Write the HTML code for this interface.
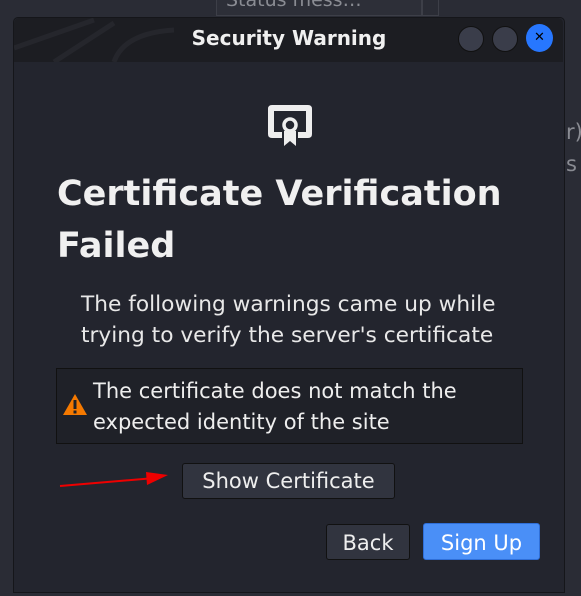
<!DOCTYPE html>
<html><head><style>
body{margin:0;width:581px;height:596px;background:#2a2c35;position:relative;overflow:hidden;font-family:"DejaVu Sans","Liberation Sans",sans-serif;color:#eeeeec}
.a{position:absolute;white-space:nowrap}
</style></head><body>
<div class="a" style="left:216px;top:-10px;width:205px;height:24px;border:1px solid #3d3f48;background:#2d2f38"></div>
<div class="a" style="left:421px;top:-10px;width:16px;height:24px;border:1px solid #3d3f48"></div>
<div class="a" style="left:226px;top:-11px;font-size:19px;color:#8a8c93">Status mess…</div>
<div class="a" style="left:566px;top:120px;font-size:21px;color:#8a8c93">r)</div>
<div class="a" style="left:566px;top:152px;font-size:21px;color:#8a8c93">s</div>
<div class="a" style="left:13px;top:17px;width:550px;height:574px;background:#23252e;border:1px solid #15161a;border-radius:5px 5px 0 0"></div>
<div class="a" style="left:14px;top:18px;width:549px;height:44px;background:#1c1d22;border-radius:5px 5px 0 0;overflow:hidden">
<svg width="200" height="44" style="position:absolute;left:0;top:0"><path d="M0 30 L80 2 M40 44 L100 5 M100 44 Q110 15 160 12" stroke="#25262c" stroke-width="5" fill="none"/></svg></div>
<div class="a" style="left:0;width:578px;top:26px;text-align:center;font-size:20px;font-weight:bold;color:#f0f0f0">Security Warning</div>
<div class="a" style="left:458px;top:26px;width:24px;height:24px;border-radius:50%;background:#3a3d4a;border:1px solid #111"></div>
<div class="a" style="left:492px;top:26px;width:24px;height:24px;border-radius:50%;background:#3a3d4a;border:1px solid #111"></div>
<div class="a" style="left:526px;top:24px;width:27px;height:28px;border-radius:50%;background:#2777ff;color:#000;font-size:13px;font-weight:bold;text-align:center;line-height:28px">✕</div>
<svg class="a" style="left:266px;top:103px" width="48" height="44" viewBox="0 0 48 44"><path d="M4 2 H42 Q46 2 46 6 V31 Q46 35 42 35 H32 V29 H40 V8 H8 V29 H16 V35 H6 Q2 35 2 31 V6 Q2 2 6 2Z" fill="#eeeeee"/><circle cx="24" cy="22" r="6" fill="none" stroke="#eeeeee" stroke-width="3.5"/><path d="M18 28 H30 V43 L24 38 L18 43Z" fill="#eeeeee"/></svg>
<div class="a" style="left:57px;top:168px;font-size:35px;font-weight:bold;line-height:52px;color:#f0f0f0">Certificate Verification<br>Failed</div>
<div class="a" style="left:81px;top:289px;font-size:21.7px;line-height:31px;color:#e8e8e8">The following warnings came up while<br>trying to verify the server's certificate</div>
<div class="a" style="left:56px;top:368px;width:465px;height:74px;background:#1f2128;border:1px solid #111"></div>
<svg class="a" style="left:62px;top:393px" width="26" height="24"><path d="M13 1 L25 22 H1Z" fill="#f57900"/><rect x="11.5" y="7" width="3" height="9" fill="#1f2128"/><rect x="11.5" y="17.5" width="3" height="3" fill="#1f2128"/></svg>
<div class="a" style="left:93px;top:376px;font-size:21px;line-height:31px;color:#eeeeee">The certificate does not match the<br>expected identity of the site</div>
<svg class="a" style="left:55px;top:465px" width="120" height="30"><path d="M5 21 L100 13" stroke="#e00" stroke-width="2"/><path d="M91 7 L113 10 L92 20Z" fill="#e00"/></svg>
<div class="a" style="left:182px;top:463px;width:211px;height:34px;background:#31343f;border:1px solid #111;border-radius:3px;text-align:center;line-height:35px;font-size:21px;color:#eeeeee">Show Certificate</div>
<div class="a" style="left:326px;top:524px;width:82px;height:34px;background:#31343f;border:1px solid #111;border-radius:3px;text-align:center;line-height:37px;font-size:21px;color:#eeeeee">Back</div>
<div class="a" style="left:423px;top:523px;width:115px;height:35px;background:#4a8ff7;border:1px solid #2f6fd8;border-radius:3px;text-align:center;line-height:38px;font-size:21px;color:#fff">Sign Up</div>
</body></html>
